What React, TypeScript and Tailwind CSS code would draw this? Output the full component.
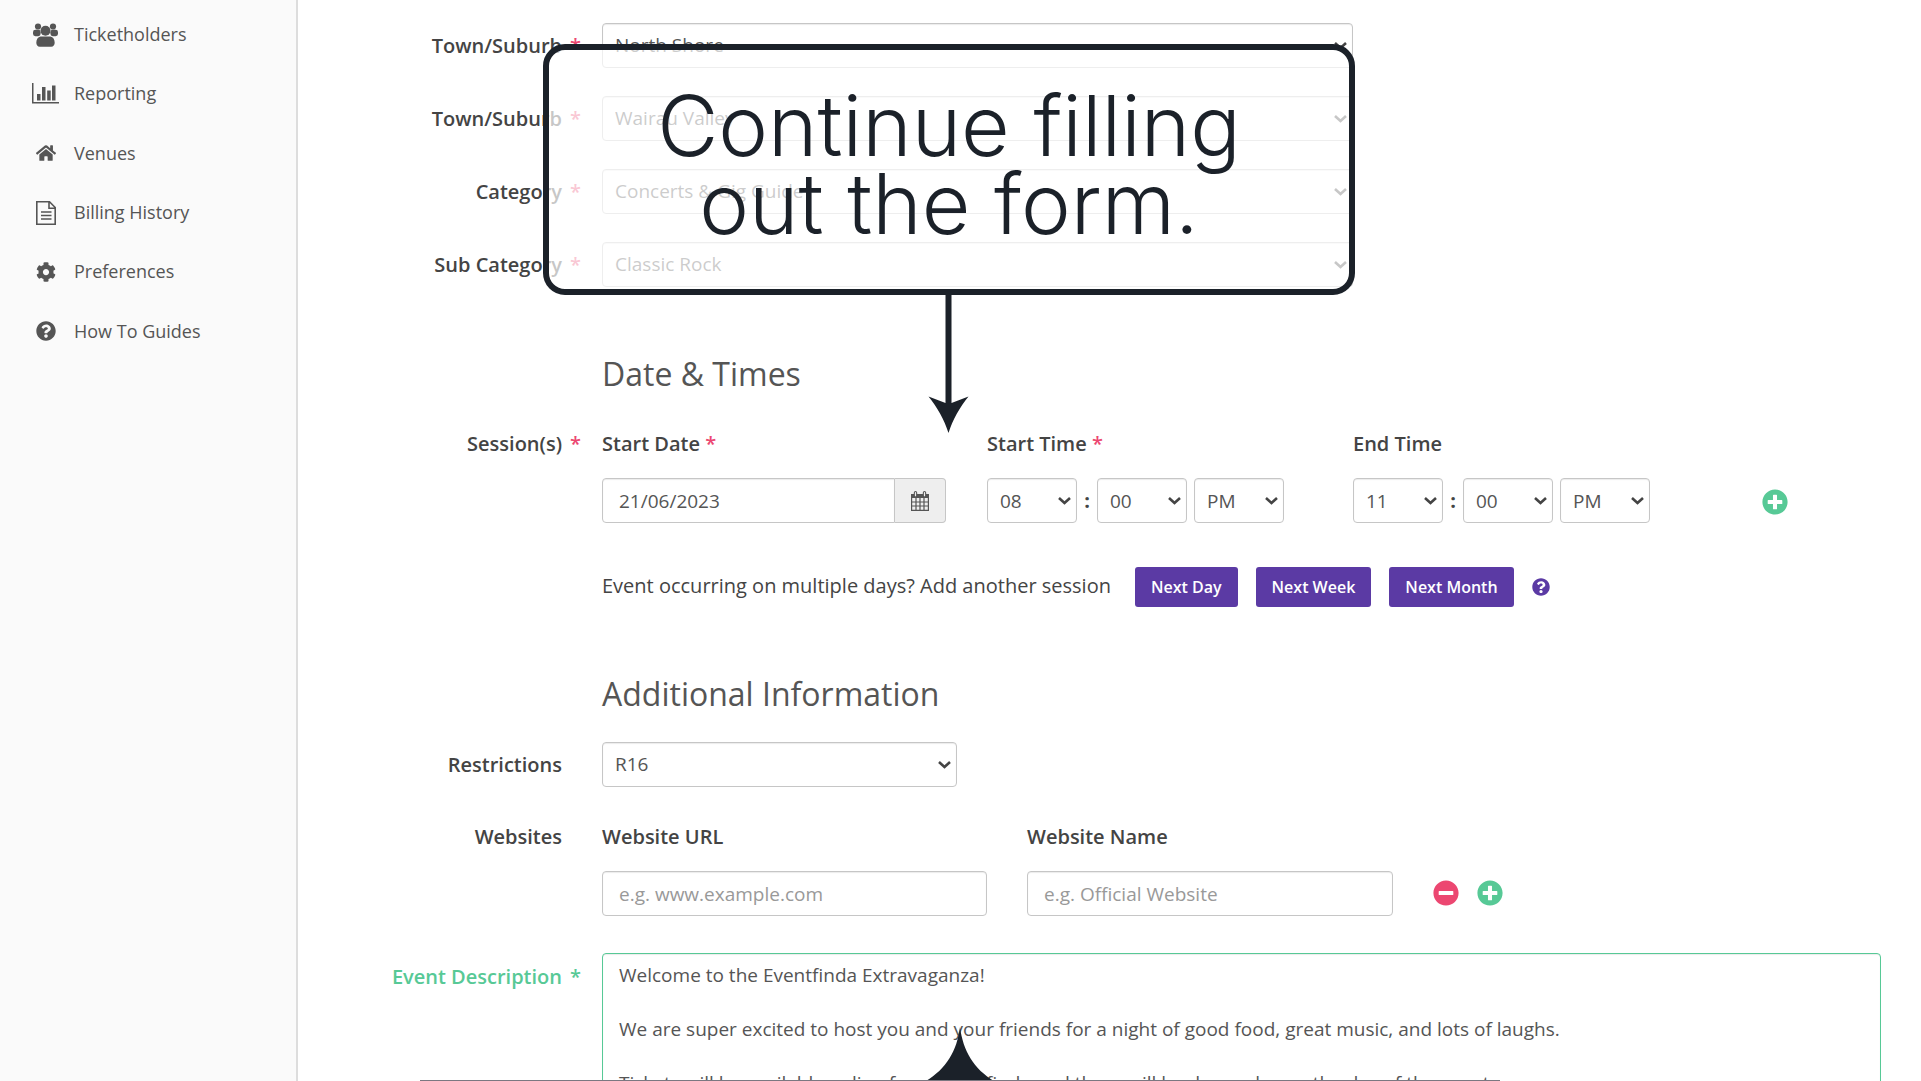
import React from 'react';
import { FaCog, FaHome, FaMinusCircle, FaPlusCircle, FaQuestionCircle } from 'react-icons/fa';

const description = `Welcome to the Eventfinda Extravaganza!

We are super excited to host you and your friends for a night of good food, great music, and lots of laughs.

Tickets will be available online from Eventfinda and there will be door sales on the day of the event.`;

const fieldClass =
    'w-full h-[45px] rounded border border-[#c6c6c6] bg-white text-[19px] font-normal text-[#555] shadow-[inset_0_1px_1px_rgba(0,0,0,0.08)] outline-none placeholder:text-[#999]';

const buttonClass = 'h-10 rounded-[3px] bg-[#5b3aa4] px-4';

const GroupIcon = () => (
    <svg viewBox="0 0 25 24" className="h-6 w-[25px]" fill="currentColor" aria-hidden="true">
        <circle cx="5" cy="3.5" r="3.1" />
        <circle cx="20" cy="3.5" r="3.1" />
        <circle cx="12.500" cy="7.800" r="5" />
        <rect x="0" y="6.800" width="7.600" height="6.400" rx="2.400" />
        <rect x="17.400" y="6.800" width="7.600" height="6.400" rx="2.400" />
        <path d="M7.500 13.600h10c2.600.4 4.200 3 4.200 6.200 0 2.400-1.300 3.900-3.500 3.900H6.800c-2.200 0-3.500-1.500-3.500-3.900 0-3.200 1.600-5.800 4.200-6.200z" />
    </svg>
);

const ChartIcon = () => (
    <svg viewBox="0 0 27 21" className="h-[21px] w-[27px]" fill="currentColor" aria-hidden="true">
        <path d="M0 0h1.500v19H27v1.500H0zM5 11h3.500v6.500H5zM10 4h3.500v13.500H10zM15.200 7.500h3.500v10h-3.500zM20 2.500h3.500v15H20z" />
    </svg>
);

const FileIcon = () => (
    <svg viewBox="0 0 20 24" className="h-6 w-5" fill="none" stroke="currentColor" strokeWidth="1.6" aria-hidden="true">
        <path d="M.8.8h12.700l5.700 5.700v16.700H.8zM13 .8V7.300h6.200M5 11h10.500M5 14.500h10.500M5 18h10.500" />
    </svg>
);

const CalendarIcon = () => (
    <svg viewBox="0 0 18 20" className="h-5 w-[18px]" fill="none" stroke="currentColor" aria-hidden="true">
        <path d="M0 3h18v4H0z" fill="currentColor" stroke="none" />
        <path d="M.6 4v15.400h16.800V4M.6 11h16.800M.6 15h16.800M5 7v12M9 7v12M13 7v12" strokeWidth="1.200" />
        <path d="M4.500 1.700v3M13.500 1.700v3" strokeWidth="3.400" strokeLinecap="round" />
        <path d="M4.500 1.700v3M13.500 1.700v3" stroke="#eee" strokeWidth="1.200" strokeLinecap="round" />
    </svg>
);

const menu = [
    { name: 'Ticketholders', icon: <GroupIcon /> },
    { name: 'Reporting', icon: <ChartIcon /> },
    { name: 'Venues', icon: <FaHome size={20} /> },
    { name: 'Billing History', icon: <FileIcon /> },
    { name: 'Preferences', icon: <FaCog size={20} /> },
    { name: 'How To Guides', icon: <FaQuestionCircle size={20} /> },
];

const Star = () => <span className="text-[#ec4771]">*</span>;

interface SelectProps {
    id?: string;
    label?: string;
    options: string[];
}

const Select: React.FC<SelectProps> = ({ id, label, options }) => (
    <div className="relative w-full">
        <select id={id} aria-label={label} className={`${fieldClass} appearance-none pl-3`}>
            {options.map((option) => (
                <option key={option}>{option}</option>
            ))}
        </select>
        <svg
            viewBox="0 0 13 8"
            className="pointer-events-none absolute right-1.5 top-[19px] h-2 w-[13px]"
            fill="none"
            stroke="#444"
            strokeWidth="2.600"
            aria-hidden="true"
        >
            <path d="M1 1l5.500 5L12 1" />
        </svg>
    </div>
);

interface RowProps {
    label?: string;
    htmlFor?: string;
    required?: boolean;
    valid?: boolean;
    className?: string;
    children: React.ReactNode;
}

const Row: React.FC<RowProps> = ({ label, htmlFor, required, valid, className = '', children }) => (
    <div className={`grid grid-cols-[284px_minmax(0,1fr)] gap-x-5 ${className}`}>
        <label
            htmlFor={htmlFor}
            className={`flex justify-end text-[20px] leading-7 font-semibold ${valid ? 'pt-2.5 text-[#57c996]' : 'text-[#444]'}`}
        >
            {label}
            <span className="w-5 pl-2">{required && (valid ? '*' : <Star />)}</span>
        </label>
        <div className="min-w-0">{children}</div>
    </div>
);

const places = [
    { id: 'town', label: 'Town/Suburb', value: 'North Shore' },
    { id: 'suburb', label: 'Town/Suburb', value: 'Wairau Valley' },
    { id: 'category', label: 'Category', value: 'Concerts & Gig Guide' },
    { id: 'subcategory', label: 'Sub Category', value: 'Classic Rock' },
];

const TimeFields = ({ name, hour }: { name: string; hour: string }) => (
    <div className="grid grid-cols-[90px_20px_90px_7px_90px] text-[20px] font-bold text-[#444]">
        <Select label={`${name} hour`} options={[hour]} />
        <span className="self-center text-center">:</span>
        <Select label={`${name} minutes`} options={['00']} />
        <span />
        <Select label={`${name} period`} options={['PM', 'AM']} />
    </div>
);

const Callout = () => (
    <>
        <div className="absolute left-[543px] top-[44px] flex h-[251px] w-[812px] items-center justify-center rounded-[22px] border-6 border-[#1b2129] bg-white/70 pb-2.5">
            <p className="text-center font-['Inter',sans-serif] text-[84px] leading-[78px] font-light text-[#1b2129]">
                Continue filling
                <br />
                out the form.
            </p>
        </div>
        <svg viewBox="0 0 41 138" className="absolute left-[928px] top-[295px] h-[138px] w-[41px]" fill="#1b2129" aria-hidden="true">
            <path d="M17.500 0h6v108l17-6.500C32 112 24.500 125 20.500 138 16.500 125 9 112 .5 101.500l17 6.500z" />
        </svg>
        {/* next callout, pointing up from below the fold */}
        <svg viewBox="0 0 68 54" className="absolute left-[926px] top-[1027px] h-[54px] w-[68px]" fill="#1b2129" aria-hidden="true">
            <path d="M34 0C37 24 48 42 68 54H0C20 42 31 24 34 0z" />
        </svg>
        <div className="absolute left-[420px] top-[1080px] h-[6px] w-[1080px] bg-[#7b7881]" />
    </>
);

const App = () => (
    <div className="relative flex h-screen overflow-hidden bg-white font-['Open_Sans',sans-serif]">
        <nav className="w-[298px] shrink-0 border-r-2 border-[#ddd] bg-[#fafafa] pt-[5px]">
            <ul className="grid h-[356px] grid-rows-6">
                {menu.map((item) => (
                    <li key={item.name}>
                        <a href="#" className="flex h-full items-center text-[18px] text-[#555]">
                            <span className="ml-8 flex w-[27px] justify-center">{item.icon}</span>
                            <span className="ml-[15px]">{item.name}</span>
                        </a>
                    </li>
                ))}
            </ul>
        </nav>

        <main className="min-w-0 flex-1 pr-10 pt-[23px]">
            <form>
                <div className="flex flex-col gap-7">
                    {places.map((place) => (
                        <Row key={place.id} label={place.label} htmlFor={place.id} required className="items-center">
                            <div className="w-[751px]">
                                <Select id={place.id} options={[place.value]} />
                            </div>
                        </Row>
                    ))}
                </div>

                <Row className="mt-[67px]">
                    <h2 className="text-[32px] leading-10 text-[#555]">Date &amp; Times</h2>
                </Row>
                <Row label="Session(s)" htmlFor="start-date" required className="mt-9">
                    <div className="grid grid-cols-[385px_366px_366px_1fr] text-[20px] leading-7 text-[#444]">
                        <div>
                            <label htmlFor="start-date" className="font-semibold">
                                Start Date <Star />
                            </label>
                            <div className="mt-5 flex w-[344px]">
                                <input id="start-date" defaultValue="21/06/2023" className={`${fieldClass} rounded-r-none px-4`} />
                                <button
                                    type="button"
                                    aria-label="Pick a date"
                                    className="flex w-[51px] shrink-0 items-center justify-center rounded-r border border-l-0 border-[#c6c6c6] bg-[#eee] text-[#555]"
                                >
                                    <CalendarIcon />
                                </button>
                            </div>
                        </div>
                        <div>
                            <div className="mb-5 font-semibold">
                                Start Time <Star />
                            </div>
                            <TimeFields name="Start" hour="08" />
                        </div>
                        <div>
                            <div className="mb-5 font-semibold">End Time</div>
                            <TimeFields name="End" hour="11" />
                        </div>
                        <button type="button" aria-label="Add session" className="mb-2 ml-[43px] self-end text-[#57c996]">
                            <FaPlusCircle size={26} />
                        </button>
                    </div>
                </Row>
                <Row className="mt-11">
                    <div className="flex items-center gap-[18px] text-[16px] font-semibold text-white">
                        <p className="mr-1.5 pb-0.5 text-[20px] leading-7 font-normal text-[#444]">
                            Event occurring on multiple days? Add another session
                        </p>
                        <button type="button" className={buttonClass}>Next Day</button>
                        <button type="button" className={buttonClass}>Next Week</button>
                        <button type="button" className={buttonClass}>Next Month</button>
                        <FaQuestionCircle size={18} className="text-[#5b3aa4]" />
                    </div>
                </Row>

                <Row className="mt-[67px]">
                    <h2 className="text-[32px] leading-10 text-[#555]">Additional Information</h2>
                </Row>
                <Row label="Restrictions" htmlFor="restrictions" className="mt-7 items-center">
                    <div className="w-[355px]">
                        <Select id="restrictions" options={['R16']} />
                    </div>
                </Row>
                <Row label="Websites" htmlFor="url" className="mt-9">
                    <div className="flex gap-10 text-[20px] leading-7 text-[#444]">
                        <div className="w-[385px]">
                            <label htmlFor="url" className="mb-5 block font-semibold">Website URL</label>
                            <input id="url" placeholder="e.g. www.example.com" className={`${fieldClass} px-4`} />
                        </div>
                        <div className="w-[366px]">
                            <label htmlFor="name" className="mb-5 block font-semibold">Website Name</label>
                            <input id="name" placeholder="e.g. Official Website" className={`${fieldClass} px-4`} />
                        </div>
                        <div className="mb-2.5 flex gap-[18px] self-end">
                            <button type="button" aria-label="Remove website" className="text-[#ec4771]">
                                <FaMinusCircle size={26} />
                            </button>
                            <button type="button" aria-label="Add website" className="text-[#57c996]">
                                <FaPlusCircle size={26} />
                            </button>
                        </div>
                    </div>
                </Row>
                <Row label="Event Description" htmlFor="description" required valid className="mt-[37px]">
                    <textarea
                        id="description"
                        rows={10}
                        defaultValue={description}
                        className="block w-full resize-none rounded border border-[#57c996] px-4 py-2 text-[19px] leading-[27px] text-[#555] shadow-[inset_0_1px_1px_rgba(0,0,0,0.08)] outline-none"
                    />
                </Row>
            </form>
        </main>

        <Callout />
    </div>
);

export default App;
